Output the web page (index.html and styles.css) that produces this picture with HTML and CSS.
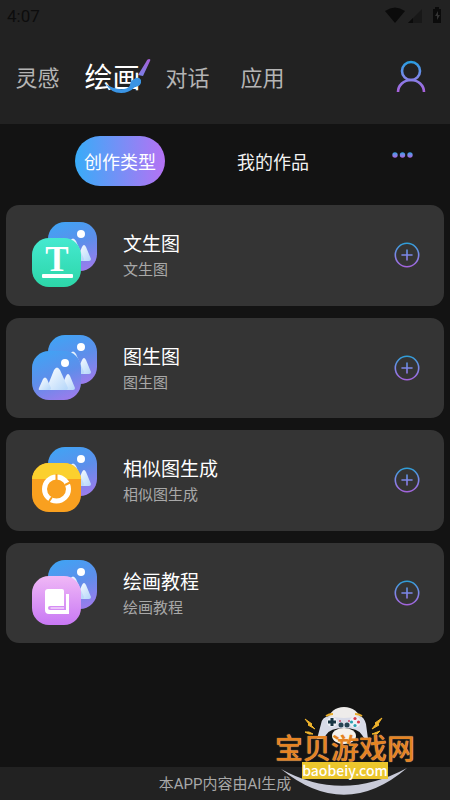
FILE: index.html
```html
<!DOCTYPE html>
<html lang="zh-CN">

<head>
    <meta charset="UTF-8">
    <meta name="viewport" content="width=device-width, initial-scale=1.0">
    <title>绘画</title>
    <link rel="stylesheet" href="styles.css">
</head>

<body>
    <!-- Shared icon parts -->
    <svg class="defs" width="0" height="0" aria-hidden="true">
        <defs>
            <linearGradient id="line" x1="0" y1="0" x2="0" y2="1">
                <stop offset="0" stop-color="#2d9fe0" />
                <stop offset="0.5" stop-color="#7d87e8" />
                <stop offset="1" stop-color="#a463dc" />
            </linearGradient>
            <linearGradient id="plusLine" gradientUnits="userSpaceOnUse" x1="0" y1="1" x2="0" y2="25">
                <stop offset="0" stop-color="#2d9fd8" />
                <stop offset="0.5" stop-color="#7d87e8" />
                <stop offset="1" stop-color="#a463dc" />
            </linearGradient>
            <linearGradient id="userLine" gradientUnits="userSpaceOnUse" x1="0" y1="1" x2="0" y2="32">
                <stop offset="0" stop-color="#249fe2" />
                <stop offset="0.5" stop-color="#7c88ea" />
                <stop offset="1" stop-color="#aa60dc" />
            </linearGradient>
            <linearGradient id="blue" x1="0.3" y1="0" x2="0.7" y2="1">
                <stop offset="0" stop-color="#42a2f4" />
                <stop offset="0.5" stop-color="#5e8eea" />
                <stop offset="1" stop-color="#9a7cec" />
            </linearGradient>
            <linearGradient id="green" x1="0" y1="0" x2="0" y2="1">
                <stop offset="0" stop-color="#45e9d0" />
                <stop offset="1" stop-color="#2cd6a8" />
            </linearGradient>
            <linearGradient id="pink" x1="0" y1="0" x2="0" y2="1">
                <stop offset="0" stop-color="#f0b8f6" />
                <stop offset="1" stop-color="#c878f4" />
            </linearGradient>
            <linearGradient id="snow" x1="0" y1="0" x2="1" y2="1">
                <stop offset="0" stop-color="#ffffff" />
                <stop offset="1" stop-color="#b4d6fa" />
            </linearGradient>
            <clipPath id="tileClip">
                <rect width="49" height="49" rx="17" />
            </clipPath>
            <symbol id="picture" viewBox="0 0 49 49">
                <rect width="49" height="49" rx="17" fill="url(#blue)" />
                <circle cx="33" cy="12" r="4" fill="#fff" />
                <path d="M28 39l6-14q2-4 4 0l5 12q0 2-2 2z" fill="url(#snow)" />
                <path d="M14 39l8-20q3-5 6 0l8 18q0 2-2 2z" fill="url(#snow)" />
                <path d="M7 37l4-9q2-3 4 0l4 9q0 2-2 2H8q-2 0-1-2z" fill="url(#snow)" />
            </symbol>
            <symbol id="plus" viewBox="0 0 26 26">
                <g fill="none" stroke="url(#plusLine)" stroke-width="1.6" stroke-linecap="round">
                    <circle cx="13" cy="13" r="11.7" />
                    <path d="M8 13h10M13 8v10" />
                </g>
            </symbol>
        </defs>
    </svg>

    <div class="app">
        <header class="header">
            <div class="status-bar">
                <span>4:07</span>
                <svg width="58" height="18" viewBox="0 0 58 18" aria-hidden="true">
                    <path d="M0 4Q10-3 20 4L10 16z" fill="#0b0b0b" />
                    <path d="M37 2v14H23z" fill="#181818" />
                    <path d="M28 11v5h-5z" fill="#0b0b0b" />
                    <path d="M48 2h2V0h4v2h2v14h-8z" fill="#0b0b0b" />
                    <path d="M53 4l-3 5h2v4l3-5h-2z" fill="#333" />
                </svg>
            </div>
            <div class="top-nav">
                <nav class="menu">
                    <a href="#">灵感</a>
                    <a href="#" class="active">绘画
                        <svg class="brush" width="46" height="36" viewBox="0 0 46 36" aria-hidden="true">
                            <defs>
                                <linearGradient id="brushFill" x1="0" y1="0" x2="0" y2="1">
                                    <stop offset="0" stop-color="#a75fd6" />
                                    <stop offset="1" stop-color="#7b7fe6" />
                                </linearGradient>
                            </defs>
                            <path d="M43 0q2 0 1 2l-7 15-5-1 8-13q1-3 3-3z" fill="url(#brushFill)" />
                            <path d="M28 20q5-3 7 1 1 6-6 7-6 6-14 6Q5 34 0 25q8 6 18 5 5-1 6-4 0-4 4-6z" fill="#3a94e4" />
                        </svg>
                    </a>
                    <a href="#">对话</a>
                    <a href="#">应用</a>
                </nav>
                <a href="#" class="profile" aria-label="我的">
                    <svg width="30" height="33" viewBox="0 0 30 33" aria-hidden="true">
                        <g fill="none" stroke="url(#userLine)" stroke-width="2.6">
                            <circle cx="15" cy="11" r="9" />
                            <path d="M2 32a13 12 0 0 1 26 0" />
                        </g>
                    </svg>
                </a>
            </div>
        </header>

        <main class="main-content">
            <div class="tabs">
                <button type="button" class="tab active">创作类型</button>
                <button type="button" class="tab">我的作品</button>
                <button type="button" class="more" aria-label="更多">
                    <svg width="22" height="6" viewBox="0 0 22 6" aria-hidden="true">
                        <g fill="url(#line)">
                            <circle cx="3" cy="3" r="2.700" />
                            <circle cx="10.500" cy="3" r="2.700" />
                            <circle cx="18" cy="3" r="2.700" />
                        </g>
                    </svg>
                </button>
            </div>

            <section class="cards">
                <div class="card">
                    <svg class="card-icon" viewBox="0 0 66 66" aria-hidden="true">
                        <use href="#picture" x="16" y="0" width="49" height="49" />
                        <rect y="16" width="49" height="49" rx="17" fill="url(#green)" />
                        <text class="letter" x="25" y="49" text-anchor="middle">T</text>
                        <rect x="10" y="52" width="31" height="4" rx="1" fill="#fff" />
                    </svg>
                    <div class="card-text">
                        <h3>文生图</h3>
                        <p>文生图</p>
                    </div>
                    <button type="button" class="add" aria-label="文生图">
                        <svg width="26" height="26" aria-hidden="true"><use href="#plus" /></svg>
                    </button>
                </div>
                <div class="card">
                    <svg class="card-icon" viewBox="0 0 66 66" aria-hidden="true">
                        <use href="#picture" x="16" y="0" width="49" height="49" />
                        <use href="#picture" x="0" y="16" width="49" height="49" />
                    </svg>
                    <div class="card-text">
                        <h3>图生图</h3>
                        <p>图生图</p>
                    </div>
                    <button type="button" class="add" aria-label="图生图">
                        <svg width="26" height="26" aria-hidden="true"><use href="#plus" /></svg>
                    </button>
                </div>
                <div class="card">
                    <svg class="card-icon" viewBox="0 0 66 66" aria-hidden="true">
                        <use href="#picture" x="16" y="0" width="49" height="49" />
                        <g transform="translate(0 16)">
                            <g clip-path="url(#tileClip)">
                                <rect width="49" height="49" fill="#f9a01f" />
                                <rect width="49" height="16" fill="#fbd02e" />
                            </g>
                            <circle cx="24.500" cy="26" r="12" fill="none" stroke="#fff" stroke-width="5" />
                            <path d="M24.500 17V11M33 22l6-3M20 34l-4 6" stroke="#f9a01f" stroke-width="2" />
                        </g>
                    </svg>
                    <div class="card-text">
                        <h3>相似图生成</h3>
                        <p>相似图生成</p>
                    </div>
                    <button type="button" class="add" aria-label="相似图生成">
                        <svg width="26" height="26" aria-hidden="true"><use href="#plus" /></svg>
                    </button>
                </div>
                <div class="card">
                    <svg class="card-icon" viewBox="0 0 66 66" aria-hidden="true">
                        <use href="#picture" x="16" y="0" width="49" height="49" />
                        <g transform="translate(0 16)">
                            <rect width="49" height="49" rx="17" fill="url(#pink)" />
                            <path d="M16 13h14q2 0 2 2v19H13V16q0-3 3-3z" fill="#fff" />
                            <path d="M34 18h3v20H17q-4 0-4-4v-3h19v3h2z" fill="#fff" />
                            <path d="M32 30H18q-2 0-2 2t2 2h14v-1.500H18.500v-1H32z" fill="#d58cf4" />
                        </g>
                    </svg>
                    <div class="card-text">
                        <h3>绘画教程</h3>
                        <p>绘画教程</p>
                    </div>
                    <button type="button" class="add" aria-label="绘画教程">
                        <svg width="26" height="26" aria-hidden="true"><use href="#plus" /></svg>
                    </button>
                </div>
            </section>
        </main>

        <footer class="footer">
            <p>本APP内容由AI生成</p>
            <!-- Site badge over the page corner -->
            <div class="badge">
                <svg class="badge-art" width="140" height="94" viewBox="0 0 140 94" aria-hidden="true">
                    <path d="M5 62Q66 96 131 61Q69 114 5 62z" fill="#c9cbd9" />
                    <path d="M51 14Q55 0 68 0t18 14l-6 6H57z" fill="#eeecea" />
                    <ellipse cx="68" cy="29" rx="12" ry="8" fill="#f6f2ee" />
                    <path d="M53 9q8 2 15 2t16-2q4 1 6 8l2 15q-4 0-6-4-4-7-18-7t-18 7q-2 4-6 4l-3 0 4-15q1-7 8-8z" fill="#d8dbe8" />
                    <path d="M50 9q3-2 7-2M79 7q4 0 7 2" fill="none" stroke="#e7ac2b" stroke-width="2" />
                    <circle cx="56" cy="15" r="5" fill="#eef0f6" />
                    <circle cx="79" cy="15" r="5.500" fill="#eef0f6" />
                    <path d="M56 11v8M52 15h8" stroke="#183443" stroke-width="3" />
                    <circle cx="64" cy="14" r="1" fill="#c54769" />
                    <circle cx="73" cy="14" r="1" fill="#c54769" />
                    <circle cx="65" cy="18" r="2.500" fill="#264454" />
                    <circle cx="71" cy="18" r="2.500" fill="#264454" />
                    <circle cx="79" cy="11.500" r="1.600" fill="#d83b4a" />
                    <circle cx="75.500" cy="15" r="1.600" fill="#28a0b0" />
                    <circle cx="82.500" cy="15" r="1.600" fill="#d83b4a" />
                    <circle cx="79" cy="18.500" r="1.600" fill="#28a0b0" />
                    <path d="M29 12l7 5-1 1 4 4-7-4 1-1zM29 25l4 0 4 2-4 0zM106 11l-7 5 1 1-4 5 7-4-1-1zM104 24l-8 3 5 0z" fill="#f0b42c" stroke="#f0b42c" />
                </svg>
                <strong class="badge-name">宝贝游戏网</strong>
                <span class="badge-url">baobeiy.com</span>
            </div>
        </footer>
    </div>
</body>

</html>
```
FILE: styles.css
```css
/* General Styles */
* {
    box-sizing: border-box;
}

body {
    margin: 0;
    background: #131313;
    color: #f2f2f2;
    font-family: 'Noto Sans CJK SC', sans-serif;
}

a {
    color: inherit;
    text-decoration: none;
}

button {
    padding: 0;
    border: none;
    background: none;
    color: inherit;
    font-family: inherit;
    cursor: pointer;
}

svg {
    display: block;
}

.defs {
    position: absolute;
}

.app {
    display: flex;
    flex-direction: column;
    min-height: 100vh;
}

/* Header */
.header {
    background: #222;
}

.status-bar {
    display: flex;
    justify-content: space-between;
    align-items: center;
    height: 32px;
    padding: 0 7px;
    color: #0d0d0d;
    font-family: Roboto, sans-serif;
    font-size: 17px;
}

.top-nav {
    display: flex;
    justify-content: space-between;
    align-items: center;
    height: 92px;
    padding-right: 24px;
    padding-bottom: 4px;
}

.menu {
    display: flex;
}

.menu a {
    width: 75px;
    color: #b4b4b4;
    font-size: 22px;
    line-height: 40px;
    text-align: center;
}

.menu .active {
    position: relative;
    color: #fff;
    font-size: 28px;
}

.brush {
    position: absolute;
    left: 31px;
    top: 3px;
}

/* Tabs */
.main-content {
    flex: 1;
}

.tabs {
    display: flex;
    align-items: center;
    padding: 12px 36px 19px 75px;
}

.tab {
    height: 50px;
    padding: 0 9px;
    margin-right: 63px;
    border-radius: 25px;
    font-size: 18px;
}

.tab.active {
    background: linear-gradient(90deg, #38acf8, #b572f4);
    color: #fff;
}

.more {
    height: 50px;
    padding-bottom: 12px;
    margin-left: auto;
}

.tab + .tab {
    margin-right: 0;
}

/* Cards */
.cards {
    display: grid;
    grid-auto-rows: 1fr;
    gap: 12px;
    min-height: 438px;
    padding: 0 6px;
}

.card {
    display: flex;
    align-items: center;
    padding: 0 24px 0 26px;
    border-radius: 13px;
    background: #343434;
}

.card-icon {
    width: 66px;
    height: 66px;
}

.letter {
    fill: #fff;
    font-family: 'Liberation Serif', serif;
    font-size: 35px;
    font-weight: bold;
}

.card-text {
    flex: 1;
    margin-left: 25px;
    padding-top: 2px;
}

.card-text h3 {
    margin: 0;
    color: #fff;
    font-size: 19px;
    font-weight: 400;
    line-height: 26px;
}

.card-text p {
    margin: 0;
    color: #a8a8a8;
    font-size: 15px;
    line-height: 26px;
}

/* Footer */
.footer {
    position: relative;
    background: #222;
}

.footer p {
    margin: 0;
    padding-top: 1px;
    color: #a8a8a8;
    font-family: Roboto, 'Noto Sans CJK SC', sans-serif;
    font-size: 15px;
    line-height: 32px;
    text-align: center;
}

.badge {
    position: absolute;
    right: 34px;
    bottom: 0;
    display: flex;
    flex-direction: column;
    align-items: center;
    width: 142px;
    height: 93px;
    padding-top: 26px;
}

.badge-art {
    position: absolute;
    left: 2px;
    top: 0;
}

.badge-name {
    position: relative;
    color: #e58322;
    font-size: 28px;
    font-weight: 500;
    line-height: 28px;
    white-space: nowrap;
    text-shadow: 0 0 1px #f6cf9a;
}

.badge-url {
    position: relative;
    width: 86px;
    margin-top: 1px;
    background: #ebc62c;
    color: #fff;
    font-size: 14px;
    font-weight: 500;
    line-height: 17px;
    text-align: center;
}
```
